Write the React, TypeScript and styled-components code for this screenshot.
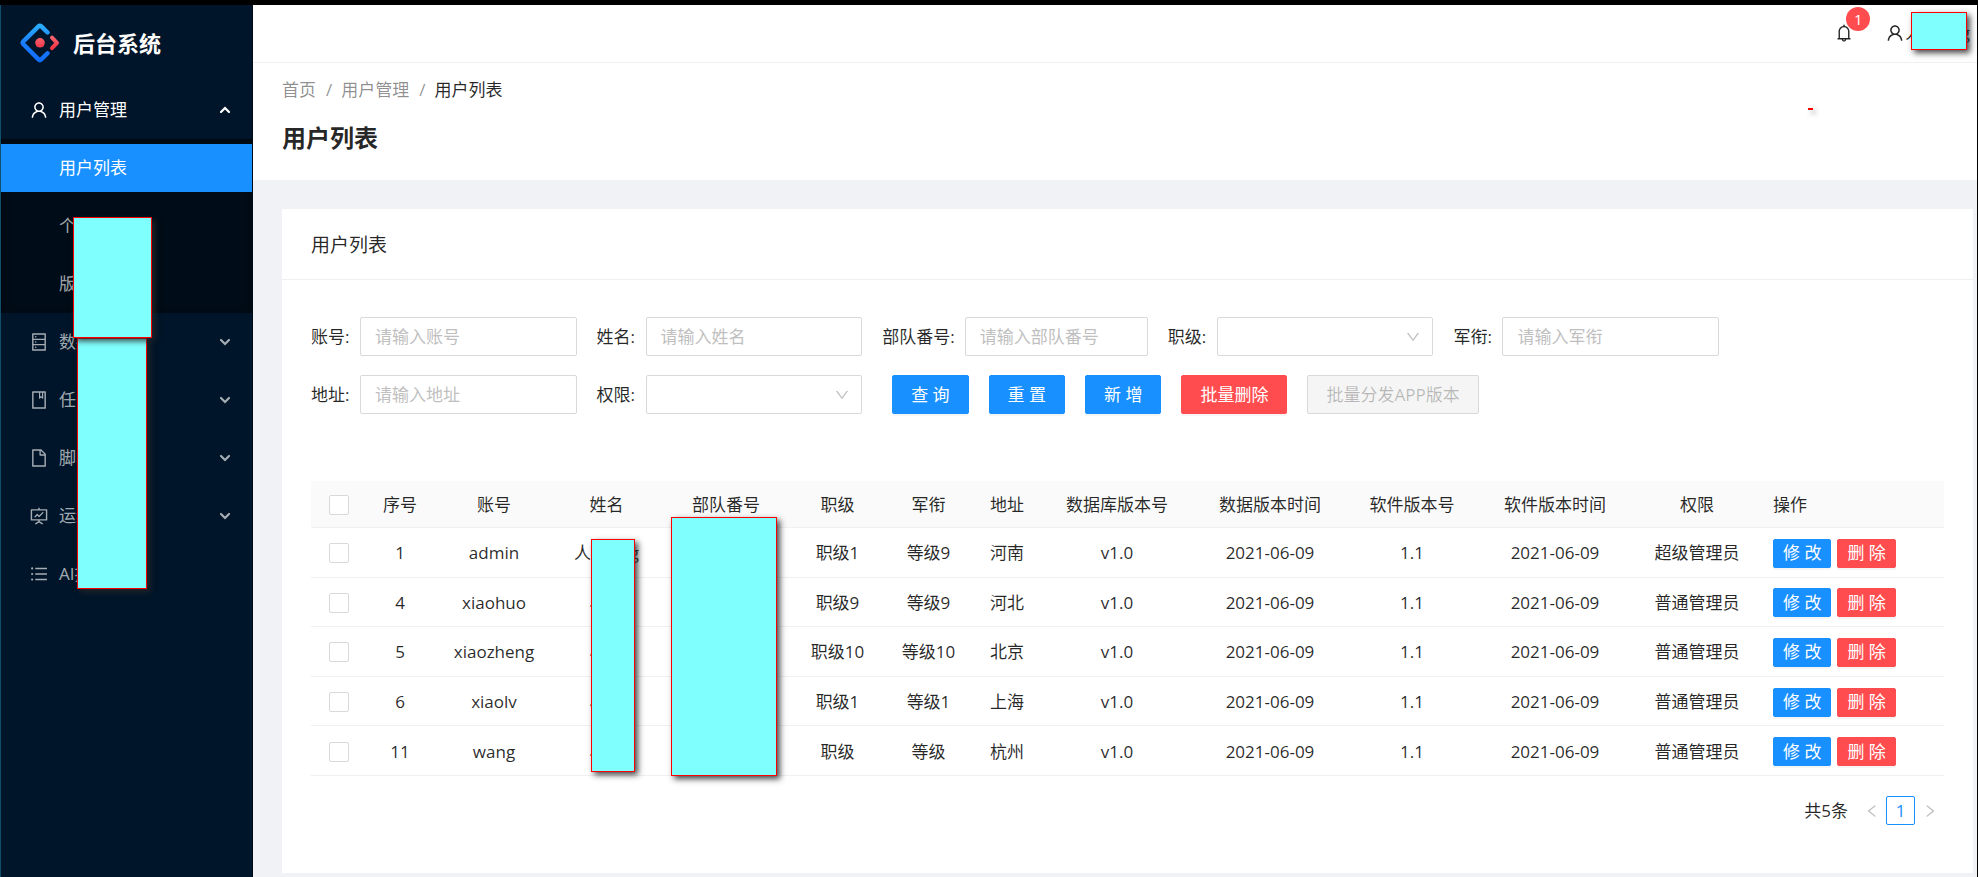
import React from 'react';
import styled, { createGlobalStyle, css } from 'styled-components';
import {
  AiOutlineBell,
  AiOutlineBook,
  AiOutlineDatabase,
  AiOutlineDown,
  AiOutlineFile,
  AiOutlineFundProjectionScreen,
  AiOutlineLeft,
  AiOutlineRight,
  AiOutlineUnorderedList,
  AiOutlineUser,
} from 'react-icons/ai';

const GlobalStyle = createGlobalStyle`
  *, *::before, *::after { box-sizing: border-box; }
  body {
    margin: 0;
    background: #f0f2f5;
    color: rgba(0, 0, 0, 0.85);
    font-family: "Open Sans", "Noto Sans CJK SC", sans-serif;
    font-size: 17px;
    line-height: 26px;
  }
  button, input, select { font: inherit; color: inherit; margin: 0; }
  ul, ol { list-style: none; margin: 0; padding: 0; }
  a { color: inherit; text-decoration: none; }
`;

const Shell = styled.div`
  display: flex;
  min-height: 100vh;
  border-top: 5px solid #000;
  border-right: 1px solid #000;
`;

/* ---------- sidebar ---------- */

const Sidebar = styled.aside`
  position: relative;
  flex: none;
  width: 253px;
  background: #001529;
  border-left: 1px solid #10506a;
  border-right: 1px solid #000a14;
`;

const Brand = styled.a`
  display: flex;
  align-items: center;
  gap: 13px;
  height: 76px;
  padding-left: 19px;
  color: #fff;
`;

const BrandName = styled.span`
  font-size: 22px;
  line-height: 32px;
  font-weight: 700;
`;

const rowStyle = css`
  display: flex;
  align-items: center;
  width: 100%;
  height: 48px;
  margin: 5px 0;
  border: 0;
  background: none;
  text-align: left;
  white-space: nowrap;
`;

const MenuItem = styled.li`
  display: flow-root;
`;

const MenuButton = styled.button<{ $open?: boolean }>`
  ${rowStyle}
  gap: 10px;
  padding: 0 21px 0 28px;
  color: ${(p) => (p.$open ? '#fff' : 'rgba(255, 255, 255, 0.65)')};
`;

const MenuText = styled.span`
  flex: 1;
`;

const SubMenu = styled.ul`
  background: #000c17;
  box-shadow: inset 0 2px 8px rgba(0, 0, 0, 0.45);
`;

const SubLink = styled.a<{ $active?: boolean }>`
  ${rowStyle}
  padding-left: 58px;
  color: ${(p) => (p.$active ? '#fff' : 'rgba(255, 255, 255, 0.65)')};
  background: ${(p) => (p.$active ? '#1890ff' : 'none')};
`;

/* ---------- main column ---------- */

const Main = styled.div`
  flex: 1;
  min-width: 0;
  display: flex;
  flex-direction: column;
`;

const TopBar = styled.header`
  position: relative;
  display: flex;
  justify-content: flex-end;
  align-items: center;
  height: 58px;
  padding: 0 7px 2px 0;
  background: #fff;
  border-bottom: 1px solid #f0f0f0;
`;

const IconButton = styled.button`
  position: relative;
  display: flex;
  align-items: center;
  padding: 0;
  border: 0;
  background: none;
`;

const BellButton = styled(IconButton)`
  margin-right: 31px;
`;

const Count = styled.span`
  position: absolute;
  left: 12px;
  top: -16px;
  width: 24px;
  height: 24px;
  border-radius: 12px;
  background: #ff4d4f;
  color: #fff;
  font-size: 15px;
  line-height: 24px;
  text-align: center;
`;

const PageHead = styled.section`
  height: 117px;
  padding: 14px 29px 0;
  background: #fff;
`;

const Crumbs = styled.ol`
  display: flex;
  color: rgba(0, 0, 0, 0.45);

  li + li::before {
    content: '/';
    margin: 0 9px 0 10px;
  }
  li:last-child {
    color: rgba(0, 0, 0, 0.85);
  }
  li:last-child::before {
    color: rgba(0, 0, 0, 0.45);
  }
`;

const PageTitle = styled.h1`
  margin: 16px 0 0;
  font-size: 24px;
  line-height: 38px;
  font-weight: 700;
`;

const Card = styled.section`
  margin: 29px 4px 4px 29px;
  background: #fff;
  flex: 1;
`;

const CardTitle = styled.h2`
  margin: 0;
  padding: 21px 29px 19px;
  border-bottom: 1px solid #f0f0f0;
  font-size: 19px;
  line-height: 30px;
  font-weight: 400;
`;

const CardBody = styled.div`
  padding: 37px 29px 48px;
`;

/* ---------- filter form ---------- */

const Filters = styled.form`
  display: grid;
  grid-template-columns: repeat(5, 1fr);
  gap: 19px 20px;
  max-width: 1408px;
`;

const Field = styled.div`
  display: flex;
  align-items: center;
  gap: 10px;
  height: 39px;
`;

const FieldLabel = styled.label`
  flex: none;
  min-width: 39px;
  white-space: nowrap;
`;

const control = css`
  width: 100%;
  min-width: 0;
  height: 39px;
  padding: 0 14px;
  border: 1px solid #d9d9d9;
  border-radius: 2px;
  background: #fff;
`;

const TextInput = styled.input`
  ${control}
  flex: 1;
  &::placeholder { color: #bfbfbf; }
`;

const SelectWrap = styled.div`
  position: relative;
  flex: 1;
  min-width: 0;

  svg {
    position: absolute;
    right: 12px;
    top: 12px;
    color: #bfbfbf;
    pointer-events: none;
  }
`;

const SelectInput = styled.select`
  ${control}
  display: block;
  appearance: none;
`;

const FilterActions = styled.div`
  grid-column: 3 / -1;
  display: flex;
  gap: 20px;
  padding-left: 10px;
`;

const Button = styled.button<{ $danger?: boolean; $small?: boolean }>`
  height: ${(p) => (p.$small ? 29 : 39)}px;
  padding: 0 ${(p) => (p.$small ? 9 : 18)}px;
  border: 1px solid ${(p) => (p.$danger ? '#ff4d4f' : '#1890ff')};
  border-radius: 2px;
  background: ${(p) => (p.$danger ? '#ff4d4f' : '#1890ff')};
  box-shadow: 0 2px 0 rgba(0, 0, 0, 0.04);
  color: #fff;
  line-height: 26px;
  white-space: nowrap;

  &:disabled {
    border-color: #d9d9d9;
    background: #f5f5f5;
    color: rgba(0, 0, 0, 0.25);
    box-shadow: none;
  }
`;

/* ---------- table ---------- */

const TableWrap = styled.div`
  position: relative;
  margin-top: 67px;
`;

const Table = styled.table`
  width: 100%;
  height: 295px;
  table-layout: fixed;
  border-collapse: separate;
  border-spacing: 0;
  text-align: center;

  th, td {
    padding: 2px 10px 0;
    border-bottom: 1px solid #f0f0f0;
    font-weight: 400;
    white-space: nowrap;
  }
  th { background: #fafafa; }
  tbody td { height: 49px; }
  thead th { height: 47px; }
  th:last-child, td:last-child { text-align: left; }
`;

const Check = styled.input`
  appearance: none;
  display: block;
  width: 20px;
  height: 20px;
  border: 1px solid #d9d9d9;
  border-radius: 2px;
  background: #fff;

  td &, th & { margin: 0 8px; }
`;

const RowActions = styled.div`
  display: flex;
  gap: 6px;
`;

const Pager = styled.nav`
  display: flex;
  justify-content: flex-end;
  align-items: center;
  margin-top: 20px;
`;

const Total = styled.span`
  margin-right: 9px;
`;

const PageButton = styled.button<{ $current?: boolean }>`
  display: flex;
  align-items: center;
  justify-content: center;
  width: 29px;
  height: 29px;
  padding: 0;
  border: 1px solid ${(p) => (p.$current ? '#1890ff' : 'transparent')};
  border-radius: 2px;
  background: #fff;
  color: ${(p) => (p.$current ? '#1890ff' : 'rgba(0, 0, 0, 0.25)')};
`;

/* Opaque cover that hides private data */
const Mask = styled.span<{ $x: number; $y: number; $w: number; $h: number }>`
  position: absolute;
  left: ${(p) => p.$x}px;
  top: ${(p) => p.$y}px;
  width: ${(p) => p.$w}px;
  height: ${(p) => p.$h}px;
  border: 1px solid #f00;
  background: #80ffff;
  box-shadow: 3px 3px 6px rgba(40, 40, 40, 0.85);
`;

const TopMask = styled(Mask)`
  left: auto;
  right: 10px;
`;

const RedMark = styled.span`
  position: absolute;
  right: 164px;
  top: 103px;
  width: 5px;
  height: 2px;
  background: #f00;
  box-shadow: 3px 3px 5px rgba(40, 40, 40, 0.5);
`;

const Logo = () => (
  <svg width="40" height="40" viewBox="0 0 40 40" fill="none" aria-hidden="true">
    <defs>
      <linearGradient id="blue" x1="20" y1="0" x2="20" y2="40" gradientUnits="userSpaceOnUse">
        <stop offset="0" stopColor="#2cb4fb" />
        <stop offset="0.5" stopColor="#1a7dff" />
        <stop offset="1" stopColor="#0f6cff" />
      </linearGradient>
      <linearGradient id="red" x1="0" y1="12" x2="0" y2="28" gradientUnits="userSpaceOnUse">
        <stop offset="0" stopColor="#fa6c78" />
        <stop offset="1" stopColor="#f3293a" />
      </linearGradient>
    </defs>
    <path
      d="M27.5 9.5 21.3 3.4a2 2 0 0 0-2.8 0L3.4 18.4a2 2 0 0 0 0 2.8l15.1 15.2a2 2 0 0 0 2.8 0l6.2-6.1"
      stroke="url(#blue)"
      strokeWidth="4.4"
      strokeLinecap="round"
    />
    <path d="M32 14.6l5 5.2-5 5.4" stroke="url(#red)" strokeWidth="4" strokeLinecap="round" strokeLinejoin="round" />
    <circle cx="20" cy="19.8" r="4.8" fill="url(#red)" />
  </svg>
);

const Chevron = ({ up }: { up?: boolean }) => (
  <svg width="12" height="8" viewBox="0 0 12 8" fill="none" stroke="currentColor" strokeWidth="2.2" strokeLinecap="round" aria-hidden="true">
    <path d={up ? 'M2 6l4-4 4 4' : 'M2 2l4 4 4-4'} />
  </svg>
);

const closedMenus = [
  { text: '数据管理', Icon: AiOutlineDatabase, arrow: true },
  { text: '任务管理', Icon: AiOutlineBook, arrow: true },
  { text: '脚本管理', Icon: AiOutlineFile, arrow: true },
  { text: '运维管理', Icon: AiOutlineFundProjectionScreen, arrow: true },
  { text: 'AI接口', Icon: AiOutlineUnorderedList, arrow: false },
];

const columns: [string, number][] = [
  ['序号', 68],
  ['账号', 120],
  ['姓名', 105],
  ['部队番号', 134],
  ['职级', 89],
  ['军衔', 93],
  ['地址', 64],
  ['数据库版本号', 156],
  ['数据版本时间', 150],
  ['软件版本号', 134],
  ['软件版本时间', 152],
  ['权限', 132],
  ['操作', 181],
];

const date = '2021-06-09';
const rows = [
  ['1', 'admin', '人cheng', '', '职级1', '等级9', '河南', 'v1.0', date, '1.1', date, '超级管理员'],
  ['4', 'xiaohuo', '小火', '', '职级9', '等级9', '河北', 'v1.0', date, '1.1', date, '普通管理员'],
  ['5', 'xiaozheng', '小郑', '', '职级10', '等级10', '北京', 'v1.0', date, '1.1', date, '普通管理员'],
  ['6', 'xiaolv', '小吕', '', '职级1', '等级1', '上海', 'v1.0', date, '1.1', date, '普通管理员'],
  ['11', 'wang', '小王', '', '职级', '等级', '杭州', 'v1.0', date, '1.1', date, '普通管理员'],
];

const fields = [
  { id: 'account', label: '账号', hint: '请输入账号' },
  { id: 'name', label: '姓名', hint: '请输入姓名' },
  { id: 'unit', label: '部队番号', hint: '请输入部队番号' },
  { id: 'level', label: '职级' },
  { id: 'rank', label: '军衔', hint: '请输入军衔' },
  { id: 'address', label: '地址', hint: '请输入地址' },
  { id: 'role', label: '权限' },
];

export default function App() {
  return (
    <>
      <GlobalStyle />
      <Shell>
        <Sidebar>
          <Brand href="#">
            <Logo />
            <BrandName>后台系统</BrandName>
          </Brand>
          <nav>
            <ul>
              <MenuItem>
                <MenuButton type="button" $open>
                  <AiOutlineUser size={20} />
                  <MenuText>用户管理</MenuText>
                  <Chevron up />
                </MenuButton>
                <SubMenu>
                  <MenuItem><SubLink href="#" $active>用户列表</SubLink></MenuItem>
                  <MenuItem><SubLink href="#">个人信息</SubLink></MenuItem>
                  <MenuItem><SubLink href="#">版本管理</SubLink></MenuItem>
                </SubMenu>
              </MenuItem>
              {closedMenus.map(({ text, Icon, arrow }) => (
                <MenuItem key={text}>
                  <MenuButton type="button">
                    <Icon size={20} />
                    <MenuText>{text}</MenuText>
                    {arrow && <Chevron />}
                  </MenuButton>
                </MenuItem>
              ))}
            </ul>
          </nav>
          <Mask $x={76} $y={333} $w={70} $h={251} />
          <Mask $x={72} $y={212} $w={79} $h={121} />
        </Sidebar>

        <Main>
          <TopBar>
            <BellButton type="button" aria-label="通知">
              <AiOutlineBell size={20} />
              <Count>1</Count>
            </BellButton>
            <IconButton type="button">
              <AiOutlineUser size={20} />
              人cheng
            </IconButton>
            <TopMask $x={0} $y={7} $w={56} $h={38} />
            <RedMark />
          </TopBar>

          <PageHead>
            <nav aria-label="面包屑">
              <Crumbs>
                <li><a href="#">首页</a></li>
                <li><a href="#">用户管理</a></li>
                <li>用户列表</li>
              </Crumbs>
            </nav>
            <PageTitle>用户列表</PageTitle>
          </PageHead>

          <Card>
            <CardTitle>用户列表</CardTitle>
            <CardBody>
              <Filters onSubmit={(e) => e.preventDefault()}>
                {fields.map((f) => (
                  <Field key={f.id}>
                    <FieldLabel htmlFor={f.id}>{f.label}:</FieldLabel>
                    {f.hint ? (
                      <TextInput id={f.id} placeholder={f.hint} />
                    ) : (
                      <SelectWrap>
                        <SelectInput id={f.id}>
                          <option value="" />
                        </SelectInput>
                        <AiOutlineDown size={16} />
                      </SelectWrap>
                    )}
                  </Field>
                ))}
                <FilterActions>
                  <Button type="submit">查 询</Button>
                  <Button type="reset">重 置</Button>
                  <Button type="button">新 增</Button>
                  <Button type="button" $danger>批量删除</Button>
                  <Button type="button" disabled>批量分发APP版本</Button>
                </FilterActions>
              </Filters>

              <TableWrap>
                <Table>
                  <colgroup>
                    <col width={55} />
                    {columns.map(([name, width]) => <col key={name} width={width} />)}
                  </colgroup>
                  <thead>
                    <tr>
                      <th><Check type="checkbox" aria-label="全选" /></th>
                      {columns.map(([name]) => <th key={name}>{name}</th>)}
                    </tr>
                  </thead>
                  <tbody>
                    {rows.map((row) => (
                      <tr key={row[0]}>
                        <td><Check type="checkbox" aria-label={`选择 ${row[1]}`} /></td>
                        {row.map((cell, i) => <td key={i}>{cell}</td>)}
                        <td>
                          <RowActions>
                            <Button type="button" $small>修 改</Button>
                            <Button type="button" $small $danger>删 除</Button>
                          </RowActions>
                        </td>
                      </tr>
                    ))}
                  </tbody>
                </Table>
                <Mask $x={280} $y={58} $w={44} $h={233} />
                <Mask $x={360} $y={36} $w={106} $h={259} />
              </TableWrap>

              <Pager aria-label="分页">
                <Total>共5条</Total>
                <PageButton type="button" aria-label="上一页"><AiOutlineLeft size={16} /></PageButton>
                <PageButton type="button" $current>1</PageButton>
                <PageButton type="button" aria-label="下一页"><AiOutlineRight size={16} /></PageButton>
              </Pager>
            </CardBody>
          </Card>
        </Main>
      </Shell>
    </>
  );
}
